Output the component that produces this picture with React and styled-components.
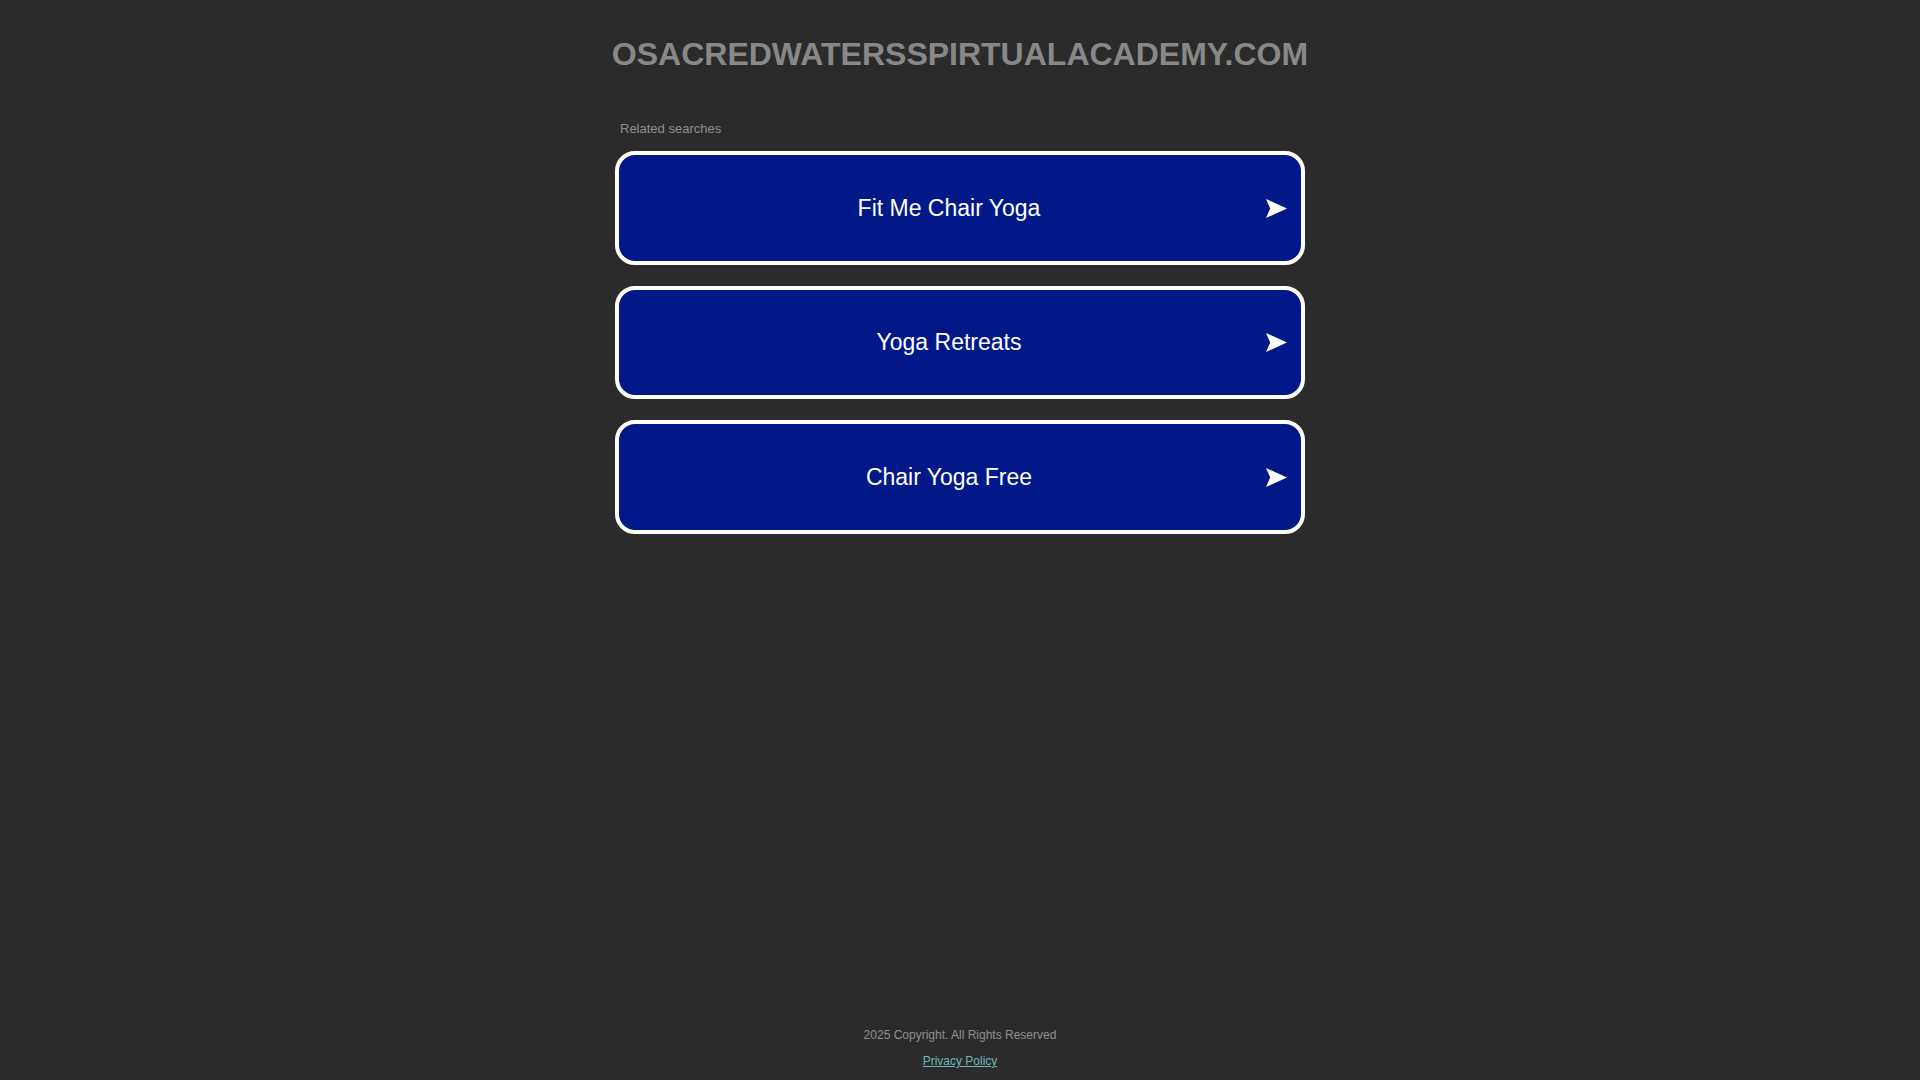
import React from "react";
import styled, { createGlobalStyle } from "styled-components";

const GlobalStyle = createGlobalStyle`
  html, body {
    margin: 0;
    padding: 0;
    background: #2b2b2b;
    font-family: "Liberation Sans", Arial, sans-serif;
  }
`;

const Page = styled.div`
  min-height: 100vh;
  display: flex;
  flex-direction: column;
  align-items: center;
  box-sizing: border-box;
`;

const Title = styled.h1`
  margin: 36px 0 0;
  font-size: 32px;
  line-height: 36px;
  font-weight: 700;
  color: #888888;
  text-align: center;
`;

const Content = styled.div`
  width: 690px;
  margin-top: 49px;
  display: flex;
  flex-direction: column;
`;

const Label = styled.div`
  font-size: 13px;
  line-height: 16px;
  color: #8f8f8f;
  padding-left: 5px;
  margin-bottom: 14px;
`;

const List = styled.div`
  display: flex;
  flex-direction: column;
  gap: 21px;
`;

const SearchLink = styled.a`
  display: flex;
  align-items: center;
  height: 113.5px;
  box-sizing: border-box;
  border: 4px solid #ffffff;
  border-radius: 20px;
  background: #011888;
  color: #ffffff;
  text-decoration: none;
  cursor: pointer;
  padding: 1px 14px 0 13px;
`;

const LinkText = styled.span`
  flex: 1;
  text-align: center;
  font-size: 23px;
`;

const Arrow = styled.svg`
  width: 21px;
  height: 19px;
  flex: none;
`;

const Footer = styled.footer`
  margin-top: auto;
  padding-bottom: 11px;
  display: flex;
  flex-direction: column;
  align-items: center;
  gap: 10px;
  font-size: 12px;
  line-height: 16px;
`;

const Copy = styled.div`
  color: #8f8f8f;
`;

const Privacy = styled.a`
  color: #72b4b8;
  text-decoration: underline;
`;

const searches = ["Fit Me Chair Yoga", "Yoga Retreats", "Chair Yoga Free"];

export default function App() {
  return (
    <>
      <GlobalStyle />
      <Page>
        <Title>OSACREDWATERSSPIRTUALACADEMY.COM</Title>
        <Content>
          <Label>Related searches</Label>
          <List>
            {searches.map((s) => (
              <SearchLink key={s} href="#">
                <LinkText>{s}</LinkText>
                <Arrow viewBox="0 0 20 18">
                  <polygon points="0,0 20,9 0,18 4,9" fill="#ffffff" />
                </Arrow>
              </SearchLink>
            ))}
          </List>
        </Content>
        <Footer>
          <Copy>2025 Copyright. All Rights Reserved</Copy>
          <Privacy href="#">Privacy Policy</Privacy>
        </Footer>
      </Page>
    </>
  );
}
